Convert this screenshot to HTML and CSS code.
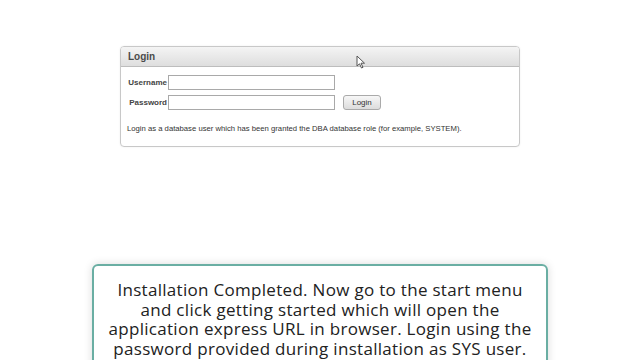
FILE: index.html
```html
<!DOCTYPE html>
<html lang="en">
<head>
    <meta charset="UTF-8">
    <title>Login</title>
    <link rel="stylesheet" href="styles.css">
</head>
<body>
    <div class="page">
        <div class="panel">
            <div class="panel-head">Login</div>
            <div class="panel-body">
                <div class="row">
                    <label for="username">Username</label>
                    <input type="text" id="username" class="field">
                </div>
                <div class="row">
                    <label for="password">Password</label>
                    <input type="password" id="password" class="field">
                    <button type="button" class="btn">Login</button>
                </div>
                <p class="note">Login as a database user which has been granted the DBA database role (for example, SYSTEM).</p>
            </div>
        </div>

        <div class="caption">
            Installation Completed. Now go to the start menu<br>
            and click getting started which will open the<br>
            application express URL in browser. Login using the<br>
            password provided during installation as SYS user.
        </div>

        <svg class="cursor" width="10" height="14" viewBox="0 0 10 14">
            <path d="M1 1 L1 11 L3.5 8.8 L5.5 13 L7 12.3 L5 8.2 L8.5 8.2 Z" fill="#fff" stroke="#555" stroke-width="1"/>
        </svg>
    </div>
</body>
</html>
```

FILE: styles.css
```css
body {
    margin: 0;
    padding: 0;
    background-color: #fff;
    font-family: "Liberation Sans", Arial, sans-serif;
    overflow: hidden;
}
.page {
    position: relative;
    width: 640px;
    height: 360px;
    padding-top: 46px;
    box-sizing: border-box;
}
.panel {
    margin-left: 120px;
    width: 400px;
    border: 1px solid #c8c8c8;
    border-radius: 4px;
    box-sizing: border-box;
    box-shadow: 0 0 2px rgba(0, 0, 0, 0.08);
}
.panel-head {
    height: 19px;
    line-height: 19px;
    padding-left: 7px;
    font-size: 10px;
    font-weight: bold;
    color: #4a4a4a;
    background: linear-gradient(#f4f4f4, #dedede);
    border-bottom: 1px solid #bdbdbd;
    border-radius: 3px 3px 0 0;
}
.panel-body {
    padding: 7px 6px 13px 6px;
}
.row {
    display: flex;
    align-items: center;
    height: 16px;
    margin-bottom: 4px;
}
.row label {
    width: 40px;
    text-align: right;
    margin-right: 1px;
    font-size: 8px;
    font-weight: bold;
    color: #444;
}
.field {
    width: 167px;
    height: 15px;
    padding: 0;
    border: 1px solid #a9a9a9;
    box-sizing: border-box;
    background: #fff;
}
.btn {
    margin-left: 8px;
    width: 38px;
    height: 15px;
    padding: 0;
    font-family: "Liberation Sans", Arial, sans-serif;
    font-size: 8px;
    color: #333;
    background: linear-gradient(#f7f7f7, #dcdcdc);
    border: 1px solid #aaa;
    border-radius: 3px;
}
.note {
    margin: 14px 0 0 0;
    font-size: 7.7px;
    color: #333;
}
.caption {
    margin: 117px auto 0 auto;
    width: 456px;
    padding: 14px 0 20px 0;
    box-sizing: border-box;
    border: 2px solid #6aaea3;
    border-radius: 6px;
    box-shadow: 0 0 8px rgba(0, 0, 0, 0.15);
    font-family: "Open Sans", sans-serif;
    font-size: 17px;
    font-weight: 500;
    letter-spacing: 0.3px;
    line-height: 19.7px;
    color: #222;
    text-align: center;
    white-space: nowrap;
}
.cursor {
    position: absolute;
    left: 356px;
    top: 55px;
}
```
